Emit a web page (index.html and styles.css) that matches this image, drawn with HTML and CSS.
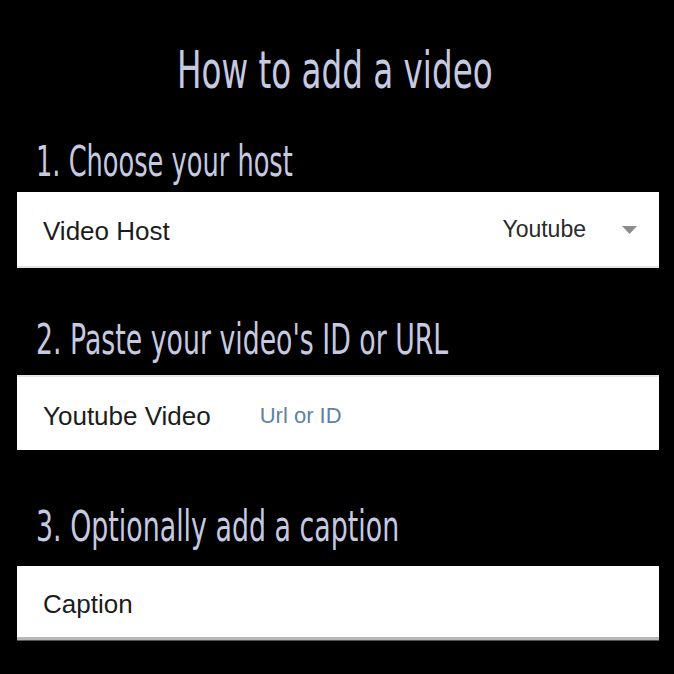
FILE: index.html
```html
<!DOCTYPE html>
<html lang="en">
<head>
<meta charset="utf-8">
<title>How to add a video</title>
<link rel="stylesheet" href="styles.css">
</head>
<body>
<main class="page">
  <h1 class="title"><span class="narrow narrow-center">How to add a video</span></h1>

  <section class="step step-1">
    <h2 class="step-title"><span class="narrow">1. Choose your host</span></h2>
    <div class="field field-select">
      <span class="label">Video Host</span>
      <span class="select-value">Youtube</span>
      <svg class="caret" width="15" height="8" viewBox="0 0 15 8"><path d="M0 0 H15 L7.5 8 Z" fill="#8c8c8c"/></svg>
    </div>
  </section>

  <section class="step step-2">
    <h2 class="step-title"><span class="narrow">2. Paste your video's ID or URL</span></h2>
    <div class="field field-input">
      <span class="label">Youtube Video</span>
      <span class="placeholder">Url or ID</span>
    </div>
  </section>

  <section class="step step-3">
    <h2 class="step-title"><span class="narrow">3. Optionally add a caption</span></h2>
    <div class="field field-caption">
      <span class="label">Caption</span>
    </div>
  </section>
</main>
</body>
</html>
```
FILE: styles.css
```css
html, body {
  margin: 0;
  padding: 0;
  background: #000;
}
.page {
  width: 674px;
  height: 674px;
  box-sizing: border-box;
  padding: 0 15px 0 17px;
  display: flex;
  flex-direction: column;
  overflow: hidden;
}
.title, .step-title {
  font-family: "DejaVu Sans", sans-serif;
  font-weight: 400;
  color: #c6cae0;
  margin: 0;
  white-space: nowrap;
}
.narrow {
  display: inline-block;
  transform: scaleX(0.625);
  transform-origin: left center;
}
.narrow-center {
  transform: scaleX(0.627);
  transform-origin: center center;
}
.step-1 .narrow { transform: scaleX(0.611); }
.step-2 .narrow { transform: scaleX(0.637); }
.step-3 .narrow { transform: scaleX(0.639); }
.title {
  font-size: 52px;
  line-height: 60px;
  text-align: center;
  margin-top: 40px;
  padding-right: 6px;
}
.step {
  display: flex;
  flex-direction: column;
}
.step-title {
  font-size: 42px;
  line-height: 48px;
  padding-left: 19px;
}
.step-1 { margin-top: 38px; }
.step-1 .step-title { margin-bottom: 6px; }
.step-2 { margin-top: 48px; }
.step-2 .step-title { margin-bottom: 11px; }
.step-3 { margin-top: 53px; }
.step-3 .step-title { margin-bottom: 15px; }

.field {
  background: #fff;
  display: flex;
  align-items: center;
  box-sizing: border-box;
  padding-left: 26px;
  padding-top: 5px;
  font-family: "Liberation Sans", Arial, sans-serif;
  color: #1c1c1c;
}
.label {
  font-size: 26px;
}
.field-select {
  height: 76px;
  border-bottom: 2px solid #e4e4e4;
  padding-right: 22px;
}
.select-value {
  margin-left: auto;
  font-size: 23px;
  color: #2a2a2a;
  margin-right: 36px;
  margin-top: -4px;
}
.caret {
  display: block;
  margin-top: -4px;
}
.field-input {
  height: 75px;
  border-top: 2px solid #e6e6e6;
}
.placeholder {
  font-size: 22px;
  color: #5f82a0;
  margin-left: 49px;
}
.field-caption {
  height: 74px;
  border-bottom: 3px solid #b8b8b8;
  box-shadow: 0 1px 0 #555;
}
```
